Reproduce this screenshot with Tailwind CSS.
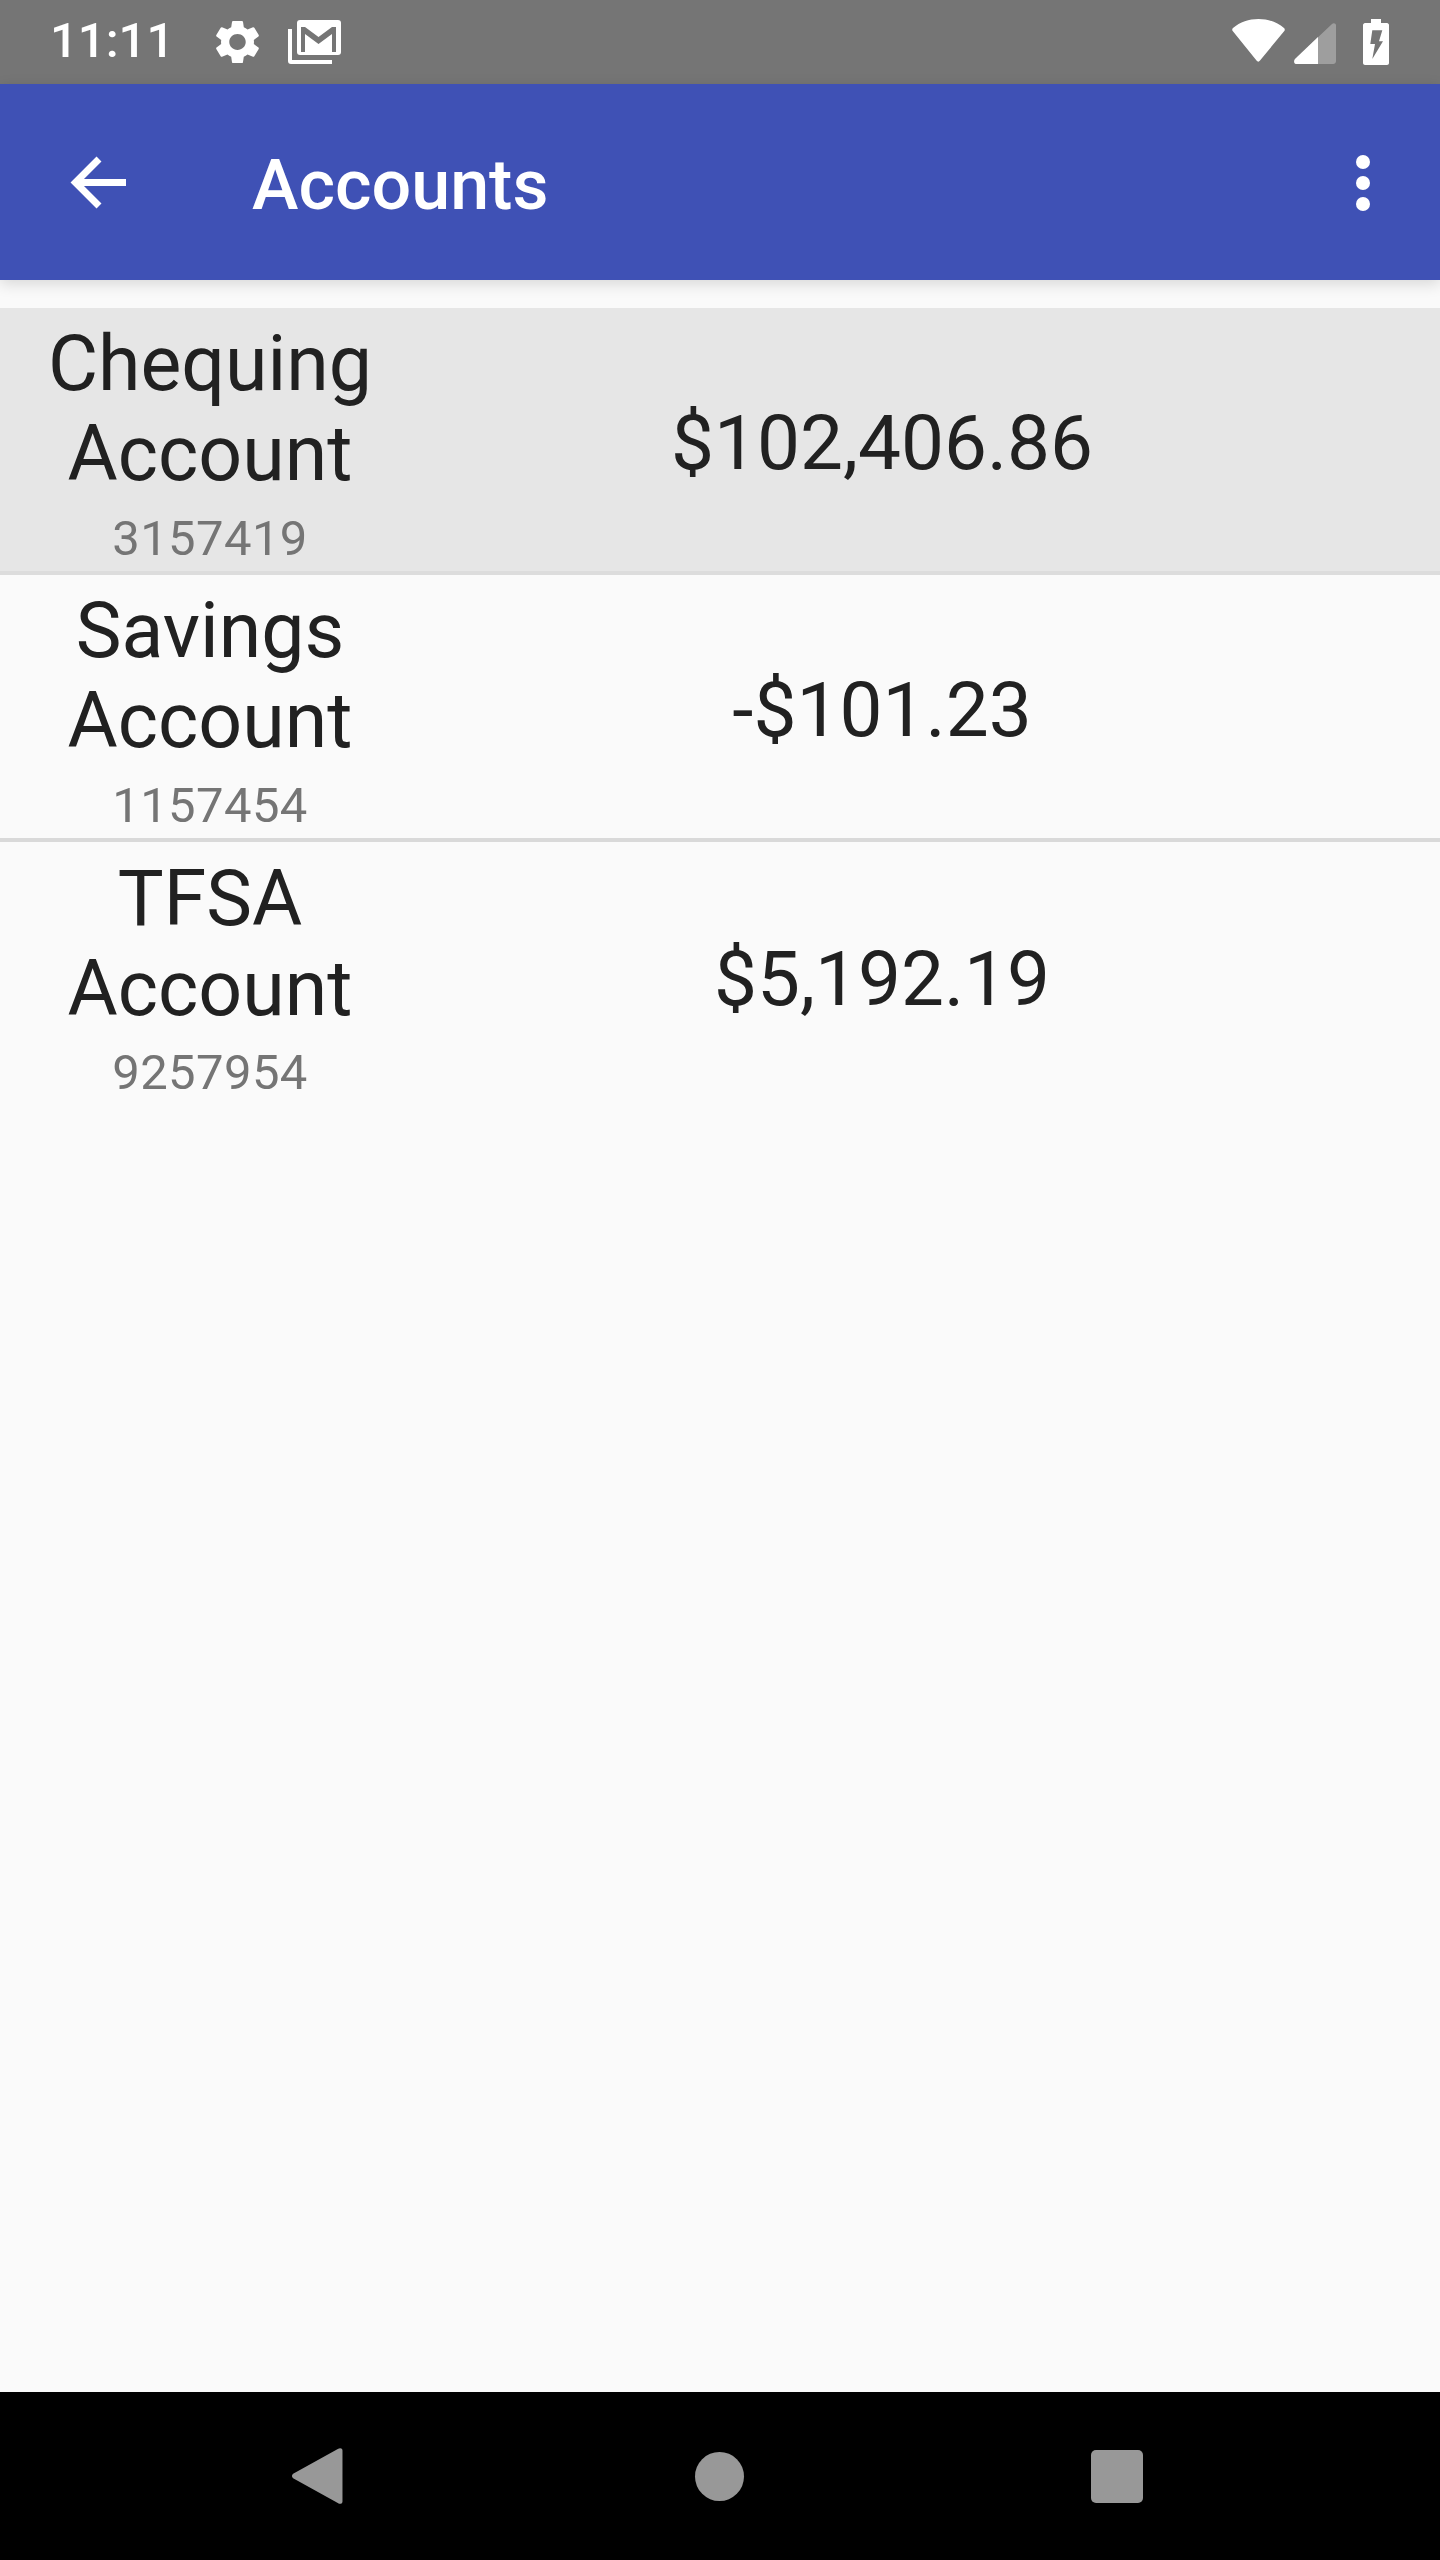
<!DOCTYPE html>
<html lang="en">
  <head>
    <meta charset="UTF-8" />
    <meta name="viewport" content="width=device-width, initial-scale=1.0" />
    <title>Accounts</title>
    <script src="https://cdn.jsdelivr.net/npm/@tailwindcss/browser@4"></script>
  </head>
  <body class="bg-[#fafafa] font-['Roboto',sans-serif]">
    <div class="flex flex-col h-[2560px] w-[1440px] overflow-hidden">
      <!-- Status bar -->
      <div class="flex items-center h-[84px] bg-[#757575] text-white pl-[50px] pr-[51px]">
        <span class="text-[49px] leading-[57px] font-medium w-[166px] -mt-[3px]">11:11</span>
        <svg class="w-[43px] h-[44px] -mt-[1px]" viewBox="2.6 2 18.8 20" fill="#fff" preserveAspectRatio="none">
          <path d="M19.14 12.94c.04-.3.06-.61.06-.94 0-.32-.02-.64-.07-.94l2.03-1.58c.18-.14.23-.41.12-.61l-1.92-3.32c-.12-.22-.37-.29-.59-.22l-2.39.96c-.5-.38-1.03-.7-1.62-.94l-.36-2.54c-.04-.24-.24-.41-.48-.41h-3.84c-.24 0-.43.17-.47.41l-.36 2.54c-.59.24-1.13.57-1.62.94l-2.39-.96c-.22-.08-.47 0-.59.22L2.74 8.87c-.12.21-.08.47.12.61l2.03 1.58c-.05.3-.09.63-.09.94s.02.64.07.94l-2.03 1.58c-.18.14-.23.41-.12.61l1.92 3.32c.12.22.37.29.59.22l2.39-.96c.5.38 1.03.7 1.62.94l.36 2.54c.05.24.24.41.48.41h3.84c.24 0 .44-.17.47-.41l.36-2.54c.59-.24 1.13-.56 1.62-.94l2.39.96c.22.08.47 0 .59-.22l1.92-3.32c.12-.22.07-.47-.12-.61l-2.01-1.58zM12 15.6c-1.98 0-3.6-1.62-3.6-3.6s1.62-3.6 3.6-3.6 3.6 1.62 3.6 3.6-1.62 3.6-3.6 3.6z" fill-rule="evenodd" />
        </svg>
        <svg class="ml-[29px] w-[53px] h-[44px] -mt-[1px]" viewBox="0 0 53 44">
          <path d="M0 9h4v31h40v4H3a3 3 0 0 1-3-3z" fill="#fff" />
          <rect x="9" y="0" width="44" height="35" rx="3" fill="#fff" />
          <path d="M13 7h4L30.500 17 44 7h4v25h-4V14L30.500 24 17 14v18h-4z" fill="#757575" />
        </svg>
        <div class="flex-1"></div>
        <svg class="w-[53px] h-[43px] -mt-[3px]" viewBox="0 0 53 43">
          <path d="M1 9C8 3 17 0 26.500 0S45 3 52 9c1 1 1 2 .3 3L28 41.500c-1 1.500-2.500 1.500-3.500 0L.7 12C0 11 0 10 1 9z" fill="#fff" />
        </svg>
        <svg class="ml-[9px] w-[42px] h-[42px] mt-[2px]" viewBox="0 0 42 42">
          <path d="M1 37 38 2c1.500-1.500 4-.8 4 1.500V39c0 1.700-1.300 3-3 3H2c-2 0-2.500-3-1-5z" fill="#fff" fill-opacity="0.3" />
          <path d="M1 37 24 15v27H2c-2 0-2.500-3-1-5z" fill="#fff" />
        </svg>
        <svg class="ml-[27px] w-[26px] h-[46px]" viewBox="0 0 26 46">
          <path d="M8 0h10v4h6c1 0 2 1 2 2v38c0 1-1 2-2 2H2c-1 0-2-1-2-2V6c0-1 1-2 2-2h6z" fill="#fff" />
          <path d="M9.300 11.300h10l-3.300 11h4L9.300 40 12 25H7.300z" fill="#757575" />
        </svg>
      </div>

      <!-- App bar -->
      <div class="relative z-10 flex items-center h-[196px] bg-[#3f51b5] text-white shadow-[0_4px_14px_rgba(0,0,0,0.14)]">
        <svg class="ml-[70px] w-[57px] h-[57px]" viewBox="0 0 57 57" fill="none" stroke="#fff" stroke-width="7">
          <path d="M56 28.500H8M29 5 5.500 28.500 29 52" />
        </svg>
        <h1 class="ml-[125px] pt-[6px] text-[70px] leading-[82px] font-medium">Accounts</h1>
        <div class="ml-auto mr-[70px] flex flex-col gap-[7px] mt-[2px]">
          <span class="w-[14px] h-[14px] rounded-full bg-white"></span>
          <span class="w-[14px] h-[14px] rounded-full bg-white"></span>
          <span class="w-[14px] h-[14px] rounded-full bg-white"></span>
        </div>
      </div>

      <!-- Accounts list -->
      <div class="flex-1 pt-[28px] text-[#212121]">
        <div class="grid grid-cols-[420px_924px] items-center h-[267px] bg-[#e6e6e6] border-b-[4px] border-[#dcdcdc] text-center">
          <div class="pt-[6px]">
            <div class="text-[77px] leading-[90px]">Chequing<br />Account</div>
            <div class="mt-[11px] text-[49px] leading-[57px] tracking-[0.4px] text-[#757575]">3157419</div>
          </div>
          <div class="pt-[7px] text-[76.5px] leading-[90px]">$102,406.86</div>
        </div>
        <div class="grid grid-cols-[420px_924px] items-center h-[267px] border-b-[4px] border-[#d9d9d9] text-center">
          <div class="pt-[6px]">
            <div class="text-[77px] leading-[90px]">Savings<br />Account</div>
            <div class="mt-[11px] text-[49px] leading-[57px] tracking-[0.4px] text-[#757575]">1157454</div>
          </div>
          <div class="pt-[7px] text-[76.5px] leading-[90px]">-$101.23</div>
        </div>
        <div class="grid grid-cols-[420px_924px] items-center h-[267px] text-center">
          <div class="pt-[3px]">
            <div class="text-[77px] leading-[90px]">TFSA<br />Account</div>
            <div class="mt-[10px] text-[49px] leading-[57px] tracking-[0.4px] text-[#757575]">9257954</div>
          </div>
          <div class="pt-[6px] text-[76.5px] leading-[90px]">$5,192.19</div>
        </div>
      </div>

      <!-- Nav bar -->
      <div class="flex items-center h-[168px] bg-black pl-[292px]">
        <svg class="w-[51px] h-[56px]" viewBox="0 0 49 56" preserveAspectRatio="none">
          <path d="M1.500 25.500 44 1c2-1.500 4.500-1 4.500 1.500v51c0 2.500-2.500 3-4.500 1.500L1.500 30.500c-2-1.500-2-3.500 0-5z" fill="#989898" />
        </svg>
        <span class="ml-[352px] w-[49px] h-[49px] rounded-full bg-[#989898]"></span>
        <span class="ml-[347px] w-[52px] h-[53px] rounded-[5px] bg-[#989898]"></span>
      </div>
    </div>
  </body>
</html>
